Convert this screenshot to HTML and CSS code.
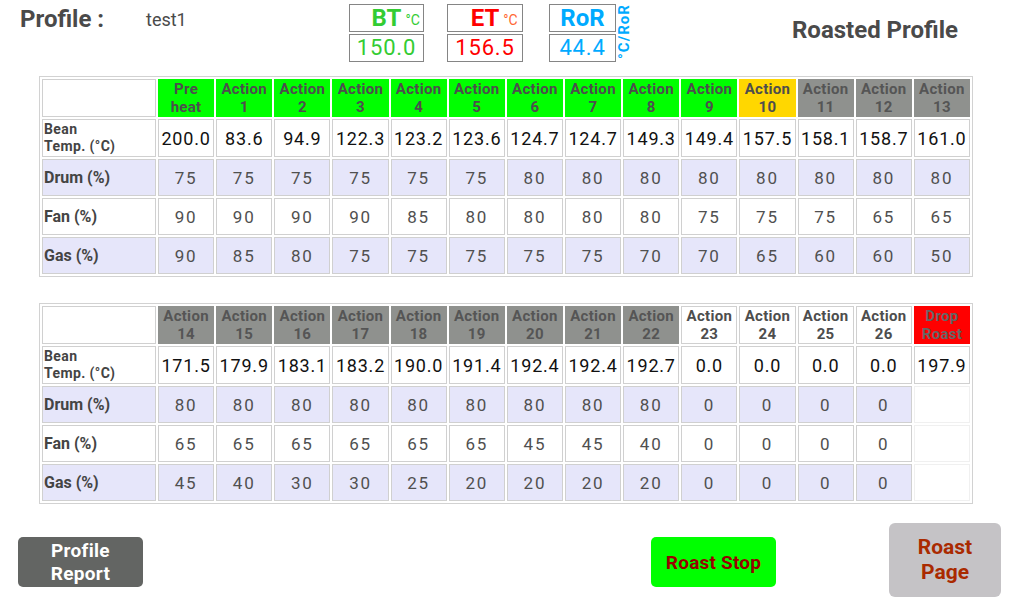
FILE: index.html
```html
<!DOCTYPE html>
<html lang="en">
<head>
<meta charset="utf-8">
<title>Roasted Profile</title>
<link rel="stylesheet" href="styles.css">
</head>
<body>
<header class="top">
  <div class="title">Profile :</div>
  <div class="name">test1</div>
  <div class="readout bt">
    <div class="lbl"><span class="sym">BT<span class="unit">°C</span></span></div>
    <div class="val">150.0</div>
  </div>
  <div class="readout et">
    <div class="lbl"><span class="sym">ET<span class="unit">°C</span></span></div>
    <div class="val">156.5</div>
  </div>
  <div class="readout ror">
    <div class="lbl"><span class="sym">RoR</span></div>
    <div class="val">44.4</div>
  </div>
  <div class="vunit">°C/RoR</div>
  <div class="page-title">Roasted Profile</div>
</header>

<table class="grid">
  <tr class="r-head">
    <td class="corner"></td>
    <td class="h green">Pre<br>heat</td>
    <td class="h green">Action<br>1</td>
    <td class="h green">Action<br>2</td>
    <td class="h green">Action<br>3</td>
    <td class="h green">Action<br>4</td>
    <td class="h green">Action<br>5</td>
    <td class="h green">Action<br>6</td>
    <td class="h green">Action<br>7</td>
    <td class="h green">Action<br>8</td>
    <td class="h green">Action<br>9</td>
    <td class="h yellow">Action<br>10</td>
    <td class="h gray">Action<br>11</td>
    <td class="h gray">Action<br>12</td>
    <td class="h gray">Action<br>13</td>
  </tr>
  <tr class="r-bean">
    <td class="label small">Bean<br>Temp. (°C)</td>
    <td>200.0</td><td>83.6</td><td>94.9</td><td>122.3</td><td>123.2</td><td>123.6</td><td>124.7</td><td>124.7</td><td>149.3</td><td>149.4</td><td>157.5</td><td>158.1</td><td>158.7</td><td>161.0</td>
  </tr>
  <tr class="r-drum alt">
    <td class="label">Drum (%)</td>
    <td>75</td><td>75</td><td>75</td><td>75</td><td>75</td><td>75</td><td>80</td><td>80</td><td>80</td><td>80</td><td>80</td><td>80</td><td>80</td><td>80</td>
  </tr>
  <tr class="r-fan">
    <td class="label">Fan (%)</td>
    <td>90</td><td>90</td><td>90</td><td>90</td><td>85</td><td>80</td><td>80</td><td>80</td><td>80</td><td>75</td><td>75</td><td>75</td><td>65</td><td>65</td>
  </tr>
  <tr class="r-gas alt">
    <td class="label">Gas (%)</td>
    <td>90</td><td>85</td><td>80</td><td>75</td><td>75</td><td>75</td><td>75</td><td>75</td><td>70</td><td>70</td><td>65</td><td>60</td><td>60</td><td>50</td>
  </tr>
</table>

<table class="grid second">
  <tr class="r-head">
    <td class="corner"></td>
    <td class="h gray">Action<br>14</td>
    <td class="h gray">Action<br>15</td>
    <td class="h gray">Action<br>16</td>
    <td class="h gray">Action<br>17</td>
    <td class="h gray">Action<br>18</td>
    <td class="h gray">Action<br>19</td>
    <td class="h gray">Action<br>20</td>
    <td class="h gray">Action<br>21</td>
    <td class="h gray">Action<br>22</td>
    <td class="h white">Action<br>23</td>
    <td class="h white">Action<br>24</td>
    <td class="h white">Action<br>25</td>
    <td class="h white">Action<br>26</td>
    <td class="h red">Drop<br>Roast</td>
  </tr>
  <tr class="r-bean">
    <td class="label small">Bean<br>Temp. (°C)</td>
    <td>171.5</td><td>179.9</td><td>183.1</td><td>183.2</td><td>190.0</td><td>191.4</td><td>192.4</td><td>192.4</td><td>192.7</td><td>0.0</td><td>0.0</td><td>0.0</td><td>0.0</td><td>197.9</td>
  </tr>
  <tr class="r-drum alt">
    <td class="label">Drum (%)</td>
    <td>80</td><td>80</td><td>80</td><td>80</td><td>80</td><td>80</td><td>80</td><td>80</td><td>80</td><td>0</td><td>0</td><td>0</td><td>0</td><td class="empty"></td>
  </tr>
  <tr class="r-fan">
    <td class="label">Fan (%)</td>
    <td>65</td><td>65</td><td>65</td><td>65</td><td>65</td><td>65</td><td>45</td><td>45</td><td>40</td><td>0</td><td>0</td><td>0</td><td>0</td><td class="empty"></td>
  </tr>
  <tr class="r-gas alt">
    <td class="label">Gas (%)</td>
    <td>45</td><td>40</td><td>30</td><td>30</td><td>25</td><td>20</td><td>20</td><td>20</td><td>20</td><td>0</td><td>0</td><td>0</td><td>0</td><td class="empty"></td>
  </tr>
</table>

<footer class="actions">
  <button class="btn report">Profile<br>Report</button>
  <button class="btn stop">Roast Stop</button>
  <button class="btn page">Roast<br>Page</button>
</footer>
</body>
</html>
```

FILE: styles.css
```css
html, body {
  margin: 0;
  padding: 0;
  background: #ffffff;
}
body {
  width: 1019px;
  height: 598px;
  overflow: hidden;
  font-family: Roboto, "Liberation Sans", sans-serif;
  color: #444;
}

/* ---------- header ---------- */
.top {
  display: flex;
  align-items: flex-start;
  height: 76px;
}
.title {
  margin-left: 20px;
  width: 126px;
  padding-top: 5px;
  font-size: 24px;
  line-height: 28px;
  font-weight: 700;
  color: #4a4a4a;
}
.name {
  width: 203px;
  padding-top: 9px;
  font-size: 18px;
  line-height: 21px;
  color: #4a4a4a;
}
.readout {
  margin-top: 4px;
  display: flex;
  flex-direction: column;
  gap: 2px;
}
.readout.bt { width: 75px; }
.readout.et { width: 76px; margin-left: 23px; }
.readout.ror { width: 67px; margin-left: 26px; }

.lbl, .val {
  box-sizing: border-box;
  height: 28px;
  border: 1px solid #858585;
  text-align: center;
}
.lbl {
  font-size: 24px;
  line-height: 26px;
  font-weight: 700;
}
.sym {
  position: relative;
}
.unit {
  position: absolute;
  left: 100%;
  top: 3px;
  padding-left: 4px;
  font-size: 14px;
  line-height: 26px;
  font-weight: 400;
  white-space: nowrap;
}
.val {
  font-size: 22px;
  line-height: 26px;
  letter-spacing: 0.8px;
}
.bt { color: #33cc33; }
.et { color: #ff0000; }
.et .unit { color: #ff6633; }
.ror { color: #00aaff; }

.vunit {
  margin-left: 2px;
  margin-top: 3px;
  height: 58px;
  writing-mode: vertical-rl;
  transform: rotate(180deg);
  text-align: center;
  font-size: 15px;
  line-height: 12px;
  font-weight: 700;
  letter-spacing: 1px;
  color: #00aaff;
}
.page-title {
  margin-left: auto;
  margin-right: 61px;
  padding-top: 16px;
  font-size: 24px;
  line-height: 28px;
  font-weight: 700;
  color: #4a4a4a;
}

/* ---------- tables ---------- */
.grid {
  margin-left: 39px;
  width: 934px;
  table-layout: fixed;
  border-collapse: separate;
  border-spacing: 2px;
  border: 1px solid #d2d2d2;
}
.grid.second {
  margin-top: 26px;
}
.grid td {
  box-sizing: border-box;
  padding: 0;
  border: 1px solid #d0d0d0;
  background: #ffffff;
  text-align: center;
  vertical-align: middle;
  white-space: nowrap;
  overflow: hidden;
}
.grid tr.r-head td:first-child {
  width: 114px;
}
.r-head { height: 36px; }
.r-bean { height: 38px; }
.r-drum { height: 37px; }
.r-fan { height: 37px; }
.r-gas { height: 37px; }

.grid td.h {
  font-size: 15px;
  line-height: 18px;
  font-weight: 700;
  letter-spacing: 0.3px;
  color: #4d4d4d;
}
.grid td.green { background: #00ff00; border-color: #00ff00; }
.grid td.yellow { background: #ffd700; border-color: #ffd700; }
.grid td.gray { background: #8f918e; border-color: #8f918e; color: #555555; }
.grid td.red { background: #ff0000; border-color: #ff0000; color: #666666; }
.grid td.white { background: #ffffff; }

.r-bean td {
  font-size: 18px;
  letter-spacing: 0.8px;
  color: #111111;
}
.r-drum td, .r-fan td, .r-gas td {
  font-size: 17px;
  letter-spacing: 1.8px;
  color: #505050;
}
.grid tr.alt td {
  background: #e6e6fa;
}
.grid td.label {
  text-align: left;
  padding-left: 1px;
  font-size: 16px;
  font-weight: 700;
  letter-spacing: 0;
  color: #444444;
}
.grid td.label.small {
  font-size: 14px;
  line-height: 17px;
  letter-spacing: 0.4px;
}
.grid td.empty,
.grid tr.alt td.empty {
  background: #ffffff;
  border-color: #f0f0f0;
}

/* ---------- buttons ---------- */
.actions {
  display: flex;
  align-items: flex-start;
  margin-top: 19px;
}
.btn {
  box-sizing: border-box;
  border: none;
  padding: 0;
  font-family: Roboto, "Liberation Sans", sans-serif;
  font-weight: 700;
  text-align: center;
}
.btn.report {
  margin-left: 18px;
  margin-top: 14px;
  width: 125px;
  height: 50px;
  border-radius: 5px;
  background: #636563;
  color: #ffffff;
  font-size: 19px;
  line-height: 23px;
  letter-spacing: 0.3px;
}
.btn.stop {
  margin-left: 508px;
  margin-top: 14px;
  width: 125px;
  height: 50px;
  border-radius: 5px;
  background: #00ff00;
  color: #990000;
  font-size: 19px;
  line-height: 23px;
  letter-spacing: 0.2px;
}
.btn.page {
  margin-left: 113px;
  width: 112px;
  height: 74px;
  border-radius: 6px;
  background: #c5c3c6;
  color: #aa2a00;
  font-size: 21px;
  line-height: 25px;
}
```
